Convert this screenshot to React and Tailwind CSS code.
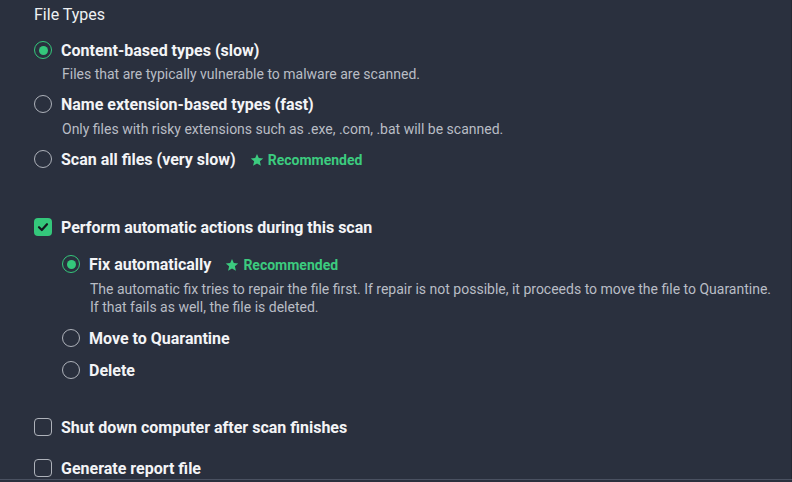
import React from "react";

function Radio({ checked }) {
  return checked ? (
    <span className="flex h-[18px] w-[18px] shrink-0 items-center justify-center rounded-full border-[1.5px] border-[#34c77b]">
      <span className="h-[9px] w-[9px] rounded-full bg-[#34c77b]" />
    </span>
  ) : (
    <span className="h-[18px] w-[18px] shrink-0 rounded-full border-[1.5px] border-[#aeb2ba]" />
  );
}

function Checkbox({ checked }) {
  return checked ? (
    <span className="flex h-[18px] w-[18px] shrink-0 items-center justify-center rounded-[4px] bg-[#34c77b]">
      <svg width="12" height="12" viewBox="0 0 12 12" fill="none">
        <path d="M2 6.2 L4.8 9 L10 3.2" stroke="#141820" strokeWidth="2.2" strokeLinecap="round" strokeLinejoin="round" />
      </svg>
    </span>
  ) : (
    <span className="h-[18px] w-[18px] shrink-0 rounded-[4px] border-[1.5px] border-[#aeb2ba]" />
  );
}

function Recommended() {
  return (
    <span className="ml-[14px] mt-[2px] flex items-center gap-[4px] text-[14px] font-bold text-[#3ccb7f]">
      <svg width="14" height="14" viewBox="0 0 24 24" fill="#3ccb7f">
        <path d="M12 1.5l3.1 7.1 7.6.7-5.8 5 1.8 7.5L12 17.8 5.3 21.8l1.8-7.5-5.8-5 7.6-.7z" />
      </svg>
      Recommended
    </span>
  );
}

function Row({ control, label, rec, className = "" }) {
  return (
    <div className={"flex h-[20px] items-center " + className}>
      {control}
      <span className="ml-[9px] mt-[2px] text-[16px] font-bold text-[#f3f4f6]">{label}</span>
      {rec && <Recommended />}
    </div>
  );
}

function Desc({ children, className = "" }) {
  return (
    <div className={"pl-[28px] text-[14px] leading-[18px] text-[#b9bdc5] " + className}>{children}</div>
  );
}

export default function App() {
  return (
    <div
      className="relative h-[482px] w-[792px] overflow-hidden bg-[#2a303e]"
      style={{ fontFamily: "Roboto, 'Liberation Sans', sans-serif" }}
    >
      <div className="h-[479px] border-r border-[#232833] pl-[34px] pt-[5px]">
        <div className="h-[20px] text-[16px] leading-[20px] text-[#eef0f3]">File Types</div>

        <Row className="mt-[15px]" control={<Radio checked />} label="Content-based types (slow)" />
        <Desc className="mt-[5px]">Files that are typically vulnerable to malware are scanned.</Desc>

        <Row className="mt-[11px]" control={<Radio />} label="Name extension-based types (fast)" />
        <Desc className="mt-[6px]">Only files with risky extensions such as .exe, .com, .bat will be scanned.</Desc>

        <Row className="mt-[11px]" control={<Radio />} label="Scan all files (very slow)" rec />

        <Row className="mt-[48px]" control={<Checkbox checked />} label="Perform automatic actions during this scan" />

        <div className="pl-[28px]">
          <Row className="mt-[17px]" control={<Radio checked />} label="Fix automatically" rec />
          <Desc className="mt-[6px]">
            The automatic fix tries to repair the file first. If repair is not possible, it proceeds to move the file to Quarantine.
            <br />
            If that fails as well, the file is deleted.
          </Desc>
          <Row className="mt-[12px]" control={<Radio />} label="Move to Quarantine" />
          <Row className="mt-[12px]" control={<Radio />} label="Delete" />
        </div>

        <Row className="mt-[37px]" control={<Checkbox />} label="Shut down computer after scan finishes" />
        <Row className="mt-[21px]" control={<Checkbox />} label="Generate report file" />
      </div>
      <div className="h-px bg-[#4a5161]" />
    </div>
  );
}
